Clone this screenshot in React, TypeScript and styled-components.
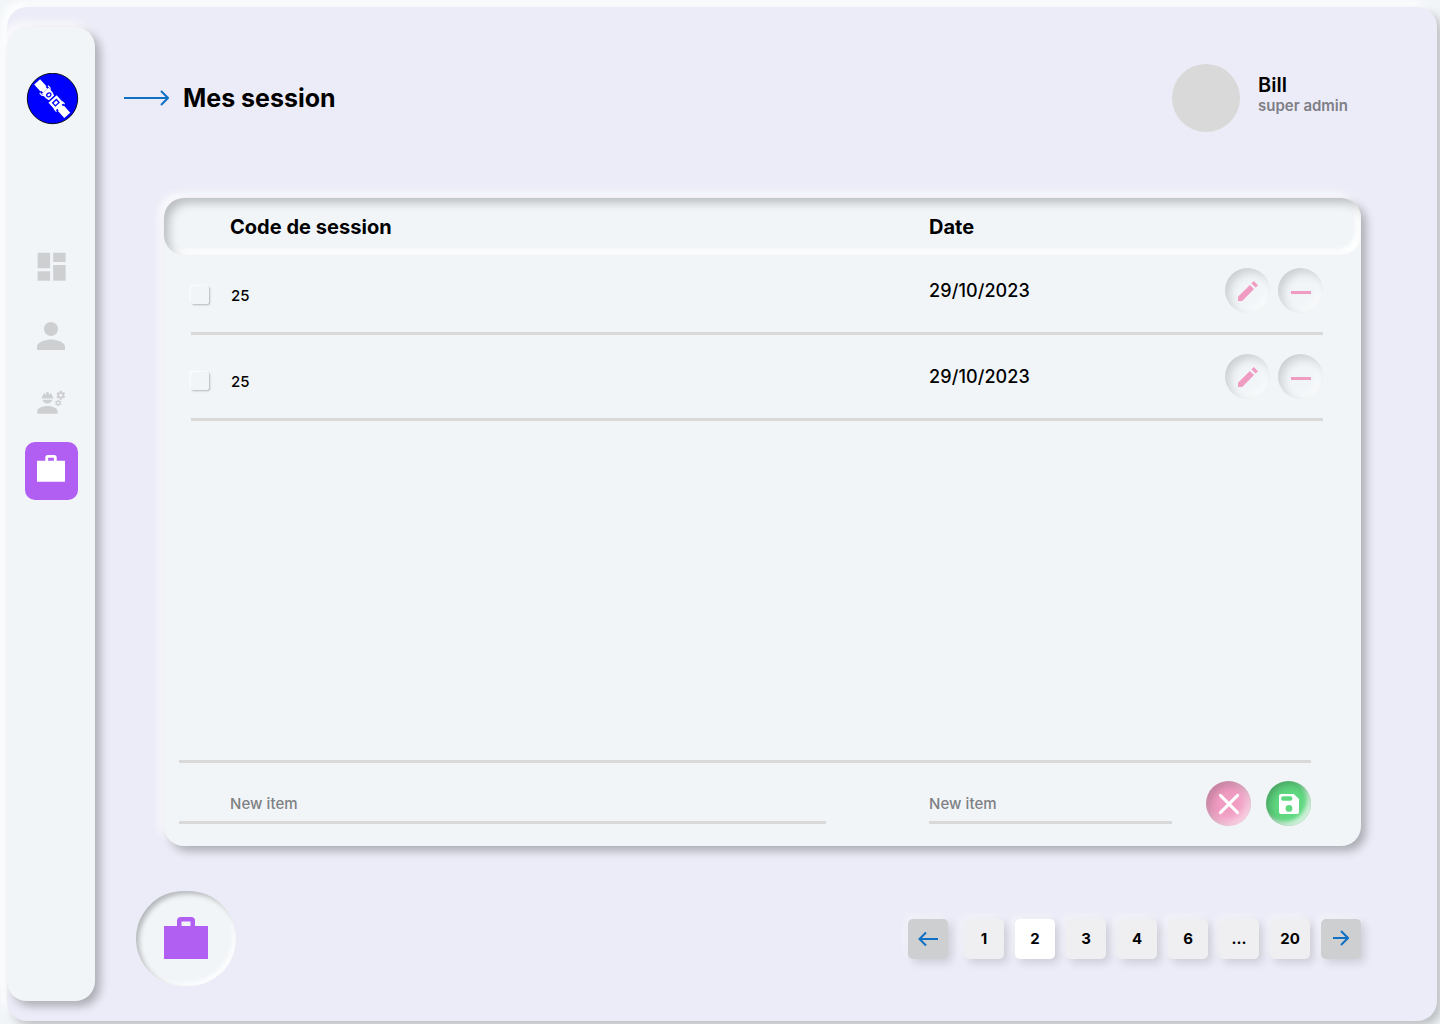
import React from "react";
import styled, { createGlobalStyle } from "styled-components";
import { MdDashboard, MdEngineering, MdPerson } from "react-icons/md";

const GlobalStyle = createGlobalStyle`
  * { box-sizing: border-box; }
  body { margin: 0; background: #f1f5f8; font-family: Inter, "Liberation Sans", sans-serif; color: #000; }
  button { font-family: inherit; border: 0; padding: 0; }
  p, h1 { margin: 0; }
`;

const Page = styled.div`
  height: 1024px;
  padding: 7px 3px 3px 7px;
  overflow: hidden;
`;

const Shell = styled.div`
  display: flex;
  align-items: flex-start;
  height: 1014px;
  border-radius: 20px;
  background: #ececf8;
  box-shadow: 5px 5px 10px rgba(0, 0, 0, 0.22), -5px -5px 10px #fff;
`;

const Sidebar = styled.aside`
  flex: none;
  display: flex;
  flex-direction: column;
  align-items: center;
  width: 88px;
  height: 974px;
  margin-top: 20px;
  padding: 46px 0 0 1px;
  border-radius: 20px;
  background: #f1f5f8;
  box-shadow: 5px 5px 10px rgba(0, 0, 0, 0.28), -4px -4px 10px rgba(255, 255, 255, 0.9);
`;

const Nav = styled.nav`
  display: flex;
  flex-direction: column;
  gap: 10px;
  margin-top: 113px;
`;

const NavItem = styled.button<{ $active?: boolean; $shift?: string }>`
  display: flex;
  align-items: center;
  justify-content: center;
  width: 53px;
  height: 58px;
  padding: ${(p) => p.$shift ?? "0"};
  border-radius: 10px;
  color: ${(p) => (p.$active ? "#fff" : "#cecfd1")};
  background: ${(p) => (p.$active ? "#b15ef2" : "transparent")};
  svg { flex: none; }
`;

const Main = styled.main`
  flex: 1;
  display: flex;
  flex-direction: column;
  padding: 57px 76px 0 29px;
`;

const Header = styled.header`
  display: flex;
  align-items: center;
  height: 68px;
`;

const Title = styled.h1`
  flex: 1;
  margin-left: 14px;
  font-size: 25px;
  font-weight: 700;
  line-height: 30px;
`;

const Avatar = styled.div`
  width: 68px;
  height: 68px;
  border-radius: 50%;
  background: #d9d9d9;
`;

const User = styled.div`
  width: 103px;
  margin: 0 0 7px 18px;
`;

const UserName = styled.p`
  font-size: 20px;
  font-weight: 600;
  line-height: 22px;
`;

const Role = styled.p`
  font-size: 15px;
  font-weight: 600;
  line-height: 19px;
  color: #7e7e86;
`;

const Card = styled.section`
  display: flex;
  flex-direction: column;
  width: 1197px;
  height: 648px;
  margin: 66px 0 0 40px;
  border-radius: 20px;
  background: #f1f5f8;
  box-shadow: 5px 5px 10px rgba(0, 0, 0, 0.28), -4px -4px 10px rgba(255, 255, 255, 0.9);
`;

const CardHead = styled.div`
  display: grid;
  grid-template-columns: 699px 1fr;
  align-items: center;
  height: 57px;
  padding-left: 66px;
  border-radius: 20px;
  font-size: 20px;
  font-weight: 700;
  letter-spacing: 0.03px;
  box-shadow: inset 5px 5px 10px rgba(0, 0, 0, 0.22), inset -5px -5px 5px #fff;
`;

const Rows = styled.div`
  flex: 1;
  margin: -6px 38px 0 27px;
`;

const Row = styled.div`
  display: grid;
  grid-template-columns: 40px 698px 1fr auto;
  align-items: center;
  height: 86px;
  border-bottom: 3px solid #d9d9d9;
`;

const Check = styled.button`
  width: 18px;
  height: 18px;
  margin-top: 8px;
  border-radius: 2px;
  background: #f1f5f8;
  box-shadow: 1px 1px 2px rgba(0, 0, 0, 0.25), -1px -1px 2px #fff;
`;

const Code = styled.span`
  margin-top: 10px;
  font-size: 15px;
  font-weight: 500;
`;

const DateText = styled.span`
  font-size: 18px;
  font-weight: 500;
  letter-spacing: 0.1px;
`;

const Actions = styled.div<{ $gap: number }>`
  display: flex;
  gap: ${(p) => p.$gap}px;
`;

const shadows = {
  plain: "inset 4px 4px 10px rgba(0,0,0,.16), inset -4px -4px 10px rgba(255,255,255,.6)",
  pink: "inset 4px 4px 10px rgba(0,0,0,.2), inset -4px -4px 10px rgba(255,255,255,.6)",
  green: "inset 3px 3px 8px rgba(0,0,0,.25), inset -4px -4px 4px rgba(255,255,255,.75)",
};
const fills = { plain: "#f1f5f8", pink: "#f19dc3", green: "#5fd880" };

const RoundButton = styled.button<{ $tone: keyof typeof fills }>`
  display: flex;
  align-items: center;
  justify-content: center;
  width: 45px;
  height: 45px;
  padding: 1px 0 0 1px;
  border-radius: 50%;
  background: ${(p) => fills[p.$tone]};
  box-shadow: ${(p) => shadows[p.$tone]};
`;

const Footer = styled.div`
  display: grid;
  grid-template-columns: 647px 243px auto;
  justify-content: space-between;
  height: 86px;
  margin: 0 50px 0 15px;
  border-top: 3px solid #d9d9d9;
`;

const Field = styled.input<{ $indent: number }>`
  height: 43px;
  margin-top: 18px;
  padding: 4px 0 0 ${(p) => p.$indent}px;
  border: 0;
  border-bottom: 3px solid #d9d9d9;
  outline: 0;
  background: transparent;
  font: 500 15px Inter, sans-serif;
  letter-spacing: 0.06px;
  &::placeholder { color: #7e8083; opacity: 1; }
`;

const FooterActions = styled(Actions)`
  margin-top: 18px;
  margin-left: -69px;
`;

const Bottom = styled.div`
  display: flex;
  align-items: center;
  justify-content: space-between;
  width: 1225px;
  margin: 45px 0 0 12px;
`;

const Badge = styled.div`
  display: flex;
  align-items: center;
  justify-content: center;
  width: 100px;
  height: 95px;
  padding-bottom: 2px;
  border-radius: 50px;
  color: #b15ef2;
  background: #f1f5f8;
  box-shadow: inset 3px 3px 5px rgba(0, 0, 0, 0.25), inset -3px -3px 5px rgba(255, 255, 255, 0.9);
`;

const Pager = styled.div`
  display: flex;
  gap: 11px;
`;

const PageButton = styled.button<{ $kind?: "arrow" | "current" }>`
  display: flex;
  align-items: center;
  justify-content: center;
  width: 40px;
  height: 40px;
  border-radius: 5px;
  font-size: 15px;
  font-weight: 700;
  color: #000;
  background: ${(p) => (p.$kind === "arrow" ? "#cecfd1" : p.$kind === "current" ? "#fff" : "#efeff1")};
  box-shadow: 4px 4px 8px rgba(0, 0, 0, 0.13), -3px -3px 8px rgba(255, 255, 255, 0.45);
  &:first-child { margin-right: 5px; }
  &:last-child { padding-bottom: 2px; }
`;

const Briefcase = ({ size }: { size: number }) => (
  <svg width={size} height={(size * 42) / 44} viewBox="0 0 44 42" fill="currentColor">
    <path
      fillRule="evenodd"
      d="M0 9H13V4Q13 0 17 0H27Q31 0 31 4V9H44V42H0ZM17.5 4.5V9H26.5V4.5Z"
    />
  </svg>
);

const Logo = () => (
  <svg width="54" height="52" viewBox="-2 0 54 52">
    <circle cx="25.5" cy="25.5" r="25.2" fill="#00f" stroke="#000" strokeWidth=".9" />
    <g transform="translate(25.2 25.6) rotate(48)" fill="#fff">
      <path d="M-22.5-4h9.5v8h-9.5zM13-4h9.5v8H13z" />
      <path d="M-12.5-5.5h3l2 1.5v8l-2 1.5h-3M12.5-5.5h-3L7.5-4v8l2 1.5h3" fill="none" stroke="#fff" strokeWidth="1.2" />
      <path d="M-13.5-3h3v6h-3zM10.5-3h3v6h-3z" />
      <path d="M-10.5-4.5h6l3.5 1v7l-3.5 1h-6zM.5-5.5h10.5v11H.5z" />
      <ellipse cx="-5" cy="0" rx="1.8" ry="2.3" stroke="#00f" strokeWidth="1.3" />
      <path d="M3.5-2.5h4v5h-4z" stroke="#00f" strokeWidth="1.3" />
    </g>
  </svg>
);

const Pencil = () => (
  <svg width="20" height="20" viewBox="0 0 20 20" fill="#f09cc2">
    <path d="M0 20v-4.2L11.9 3.9 16 8 4.2 20zM13.4 2.4 15.8 0 20 4.2l-2.4 2.4z" />
  </svg>
);

const MinusIcon = styled.svg`
  margin-top: 2px;
`;

const Minus = () => (
  <MinusIcon width="20" height="3" viewBox="0 0 20 3">
    <path d="M0 0h20v3H0z" fill="#f09cc2" />
  </MinusIcon>
);

const Cross = () => (
  <svg width="22" height="22" viewBox="0 0 22 22">
    <path d="m2.4 2.4 17.2 17.2M19.6 2.4 2.4 19.6" stroke="#fff" strokeWidth="3" strokeLinecap="round" />
  </svg>
);

const Save = () => (
  <svg width="20" height="20" viewBox="0 0 20 20">
    <path
      fill="#fff"
      fillRule="evenodd"
      d="M2 0H14.8L20 5V18Q20 20 18 20H2Q0 20 0 18V2Q0 0 2 0ZM4.3 2.2a2.2 2.2 0 0 0 0 4.5h6.9a2.2 2.2 0 0 0 0-4.5ZM10 11a3.4 3.4 0 1 0 0 6.8 3.4 3.4 0 0 0 0-6.8Z"
    />
  </svg>
);

const Arrow = ({ width, back }: { width: number; back?: boolean }) => (
  <svg width={width} height="16" viewBox={`0 0 ${width} 16`} fill="none" stroke="#1070c4" strokeWidth="2">
    <path d={back ? `M${width} 8H1.5M8 1.5 1.5 8 8 14.5` : `M0 8H${width - 1.5}M${width - 8} 1l7 7-7 7`} />
  </svg>
);

const sessions = [
  { code: "25", date: "29/10/2023" },
  { code: "25", date: "29/10/2023" },
];
const pages = ["1", "2", "3", "4", "6", "...", "20"];

export default function App() {
  return (
    <Page>
      <GlobalStyle />
      <Shell>
        <Sidebar>
          <Logo />
          <Nav>
            <NavItem $shift="0 0 0 1px"><MdDashboard size={37.3} /></NavItem>
            <NavItem $shift="2px 1px 0 0"><MdPerson size={42} /></NavItem>
            <NavItem $shift="0 1px 2px 0"><MdEngineering size={30.5} /></NavItem>
            <NavItem $active $shift="0 1px 5px 0"><Briefcase size={28} /></NavItem>
          </Nav>
        </Sidebar>
        <Main>
          <Header>
            <Arrow width={45} />
            <Title>Mes session</Title>
            <Avatar />
            <User>
              <UserName>Bill</UserName>
              <Role>super admin</Role>
            </User>
          </Header>
          <Card>
            <CardHead>
              <span>Code de session</span>
              <span>Date</span>
            </CardHead>
            <Rows>
              {sessions.map((s, i) => (
                <Row key={i}>
                  <Check />
                  <Code>{s.code}</Code>
                  <DateText>{s.date}</DateText>
                  <Actions $gap={8}>
                    <RoundButton $tone="plain"><Pencil /></RoundButton>
                    <RoundButton $tone="plain"><Minus /></RoundButton>
                  </Actions>
                </Row>
              ))}
            </Rows>
            <Footer>
              <Field $indent={51} placeholder="New item" />
              <Field $indent={0} placeholder="New item" />
              <FooterActions $gap={15}>
                <RoundButton $tone="pink"><Cross /></RoundButton>
                <RoundButton $tone="green"><Save /></RoundButton>
              </FooterActions>
            </Footer>
          </Card>
          <Bottom>
            <Badge><Briefcase size={44} /></Badge>
            <Pager>
              <PageButton $kind="arrow"><Arrow width={20} back /></PageButton>
              {pages.map((p) => (
                <PageButton key={p} $kind={p === "2" ? "current" : undefined}>{p}</PageButton>
              ))}
              <PageButton $kind="arrow"><Arrow width={16} /></PageButton>
            </Pager>
          </Bottom>
        </Main>
      </Shell>
    </Page>
  );
}
